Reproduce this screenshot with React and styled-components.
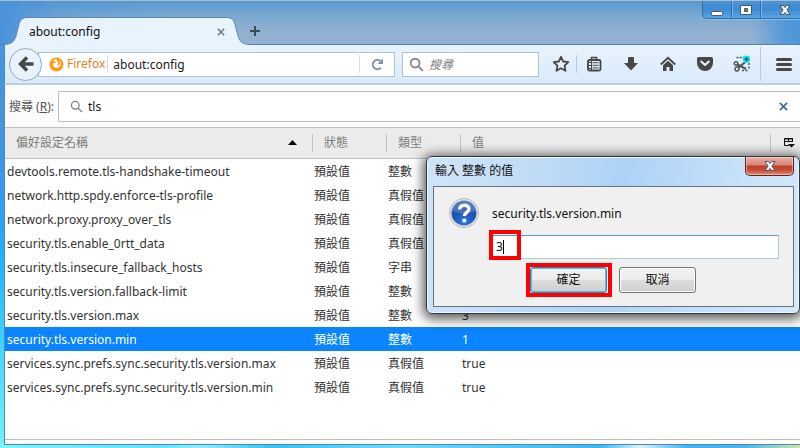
import React from "react";
import styled, { createGlobalStyle, css } from "styled-components";

const Global = createGlobalStyle`
  *, *::before, *::after { box-sizing: border-box; }
  html, body, #root { height: 100%; }
  body { margin: 0; overflow: hidden; }
  body, button, input {
    font: 12px/24px "Noto Sans", "Noto Sans CJK TC", sans-serif;
    color: #333;
  }
  button { padding: 0; border: 0; background: none; }
`;

const Desktop = styled.div`
  position: relative;
  height: 100%;
  min-height: 100vh;
  padding: 0 0 3px 4px;
  overflow: hidden;
  background: linear-gradient(180deg, #4f93d8 0, #3f95e0 150px, #2f9ff0 210px, #22b2f8 260px, #4ad4fc 350px, #74f2fc 448px);
`;

const DesktopGlow = styled.div`
  position: absolute;
  inset: auto 0 0 0;
  height: 4px;
  background: linear-gradient(90deg, #7df5fd 0, #5fe6fb 20%, #8ff0ff 25%, #35c4f5 34%, #6fdcf8 50%, #3bb7f2 75%, #d8f4ff 80%, #3cb4f4 86%, #4bb5ee 93%, #cfe8a8 100%);
`;

const BrowserWindow = styled.main`
  position: relative;
  display: flex;
  flex-direction: column;
  height: 100%;
`;

const TitleBar = styled.header`
  display: flex;
  align-items: flex-end;
  height: 45px;
  margin-left: -4px;
  padding-left: 4px;
  border-top: 1px solid #a9bdd0;
  background:
    linear-gradient(#5282ae, #5282ae) 0 100% / 100% 1px no-repeat,
    linear-gradient(90deg, rgba(73, 145, 218, 1) 0, rgba(73, 145, 218, 0.3) 60px, transparent 170px, transparent 94%, rgba(70, 148, 218, 0.8) 98%, #4b97da 100%),
    linear-gradient(180deg, #5a98d0 0, #79a8d2 14px, #92b0d0 30px, #93b2d2 100%);
`;

const Tab = styled.div`
  display: flex;
  flex: 0 0 246px;
  height: 28px;
`;

const TabEdge = styled.svg`
  flex: none;
  width: 24px;
  height: 28px;
`;

const TabBody = styled.div`
  display: flex;
  flex: 1;
  align-items: center;
  justify-content: space-between;
  padding-left: 1px;
  border-top: 1px solid #5b88b2;
  background: #e8f3fd;
  color: #111;
`;

const IconButton = styled.button`
  display: grid;
  flex: none;
  place-items: center;
  width: ${(p) => p.$width || 24}px;
  height: 24px;
  color: #4a4a4a;
  svg { display: block; }
`;

const WindowControls = styled.div`
  display: flex;
  align-self: flex-start;
  height: 18px;
  margin-left: auto;
  border: solid #2f6ea8;
  border-width: 0 0 1px 1px;
  border-radius: 0 0 0 5px;
  background: linear-gradient(#4c95d8, #3d8bd2 50%, #5aa5e4);
  box-shadow: 0 1px 0 #8bbbe6;
`;

const WindowControl = styled.button`
  display: grid;
  place-items: center;
  width: ${(p) => p.$width}px;
  height: 17px;
  & + & { border-left: 1px solid #2f6ea8; box-shadow: inset 1px 0 #7db6e8; }
  &:last-child { padding-left: 8px; }
`;

const NavBar = styled.nav`
  display: flex;
  align-items: center;
  height: 40px;
  padding-left: 5px;
  border-left: 1px solid #4f87b8;
  border-bottom: 2px solid #bccfe2;
  background: linear-gradient(#e8f3fd, #daeafa);
`;

const BackButton = styled.button`
  position: relative;
  display: grid;
  flex: none;
  place-items: center;
  width: 33px;
  height: 33px;
  margin-left: -1px;
  border: 1px solid #8faac4;
  border-radius: 50%;
  background: #e9f3fd;
`;

const UrlBox = styled.div`
  display: flex;
  flex: 1;
  align-items: center;
  min-width: 0;
  height: 25px;
  margin-left: -4px;
  padding-left: 10px;
  border: 1px solid #aec2d6;
  background: #fff;
`;

const Identity = styled.div`
  display: flex;
  flex: none;
  align-items: center;
  gap: 3px;
  height: 18px;
  padding-right: 2px;
  border-right: 1px solid #dcdcdc;
  color: #e08125;
`;

const TextInput = styled.input`
  flex: 1;
  min-width: 0;
  width: 100%;
  height: 24px;
  padding: 1px 5px 0;
  border: 0;
  outline: 0;
  background: transparent;
  color: #1a1a1a;
  &::placeholder { color: #808080; font-style: italic; opacity: 1; }
`;

const ReloadSlot = styled.div`
  display: flex;
  height: 18px;
  align-items: center;
  border-left: 1px solid #ddd;
`;

const WebSearch = styled.div`
  display: flex;
  align-items: center;
  flex: 0 0 137px;
  height: 25px;
  margin: 0 7px;
  padding-left: 6px;
  border: 1px solid #aec2d6;
  background: #fff;
`;

const Divider = styled.span`
  flex: none;
  width: 1px;
  height: ${(p) => p.$height}px;
  margin-right: ${(p) => (p.$tight ? -2 : 0)}px;
  background: #bccbd9;
`;

const FilterBar = styled.form`
  display: flex;
  align-items: center;
  gap: 4px;
  height: 42px;
  padding-left: 4px;
  border-left: 1px solid #4f87b8;
  background: #fbfbfb;
  label { flex: none; padding-top: 1px; color: #555; }
`;

const FilterField = styled.div`
  display: flex;
  flex: 1;
  align-items: center;
  height: 31px;
  padding: 0 5px 0 11px;
  border: 1px solid #bdbdbd;
  border-right: 0;
  border-radius: 2px 0 0 2px;
  background: #fff;
`;

const Content = styled.section`
  flex: 1;
  min-height: 0;
  border: solid #4f87b8;
  border-width: 0 0 1px 1px;
  background: #fbfbfb;
  padding-bottom: 4px;
`;

const TablePane = styled.div`
  height: 100%;
  border: solid #c0c0c0;
  border-width: 1px 0;
  background: #fff;
`;

const PrefTable = styled.table`
  width: 100%;
  border-collapse: collapse;
  table-layout: fixed;
`;

const Col = styled.col`
  width: ${(p) => (p.$width ? `${p.$width}px` : "auto")};
`;

const HeadCell = styled.th`
  height: 30px;
  padding: 0;
  border-bottom: 1px solid #bdbdbd;
  background: #ebebeb;
  color: #7b7b7b;
  font-weight: 400;
  text-align: left;
`;

const HeadLabel = styled.div`
  display: flex;
  align-items: center;
  justify-content: space-between;
  height: 18px;
  padding: 0 15px 0 ${(p) => (p.$first ? 10 : 11)}px;
  border-left: 1px solid ${(p) => (p.$first ? "transparent" : "#c4c4c4")};
`;

const PrefRow = styled.tr`
  height: 24px;
  ${(p) => p.$selected && css`
    background: #0a84ff;
    color: #fff;
  `}
`;

const Cell = styled.td`
  padding: 2px 0 0 2px;
  line-height: 22px;
  white-space: nowrap;
`;

const Dialog = styled.section`
  position: absolute;
  top: 156px;
  right: 0;
  display: flex;
  flex-direction: column;
  width: 374px;
  height: 158px;
  padding: 0 5px 6px 6px;
  border: 1px solid #30373f;
  border-radius: 6px;
  background: linear-gradient(100deg, #cfe4fa 0, #c3dcf6 25%, #add2f6 50%, #c8e1fa 80%, #d4e8fc 100%);
  box-shadow: inset 0 0 0 1px #eef7ff, 0 2px 12px 3px rgba(0, 0, 0, 0.65);
`;

const DialogTitle = styled.header`
  display: flex;
  flex: none;
  justify-content: space-between;
  height: 29px;
  padding-left: 2px;
  h1 { margin: 0; color: #111; font-size: 12px; font-weight: 400; line-height: 28px; }
`;

const CloseButton = styled.button`
  display: grid;
  place-items: center;
  width: 49px;
  height: 19px;
  border: solid #5a2620;
  border-width: 0 1px 1px;
  border-radius: 0 0 5px 5px;
  background: linear-gradient(#e9aea3 0, #d98375 45%, #bf3b26 50%, #c9503a 75%, #e08c78 100%);
  box-shadow: inset 0 0 0 1px rgba(255, 255, 255, 0.4);
`;

const DialogBody = styled.form`
  display: grid;
  flex: 1;
  grid-template-columns: 44px 1fr;
  align-content: start;
  padding: 10px 14px 0;
  border: 1px solid #66727e;
  background: #f0f0f0;
  label { color: #111; line-height: 34px; }
`;

const PromptRow = styled.div`
  position: relative;
  grid-column: 2;
  height: 24px;
  margin-top: 4px;
`;

const PromptInput = styled.input`
  width: 100%;
  height: 24px;
  padding: 0 3px;
  border: 1px solid #a9cbe6;
  border-top-color: #5e9ac6;
  outline: 0;
  background: #fff;
  color: #111;
`;

const Highlight = styled.span`
  position: absolute;
  inset: -4px -5px -4px -4px;
  border: 4px solid #f00;
  pointer-events: none;
`;

const InputHighlight = styled(Highlight)`
  inset: -5px auto auto -3px;
  width: 32px;
  height: 30px;
`;

const Caret = styled.span`
  position: absolute;
  top: 5px;
  left: 11px;
  width: 1px;
  height: 14px;
  background: #000;
`;

const Actions = styled.div`
  display: flex;
  grid-column: 1 / -1;
  gap: 12px;
  margin: 8px 0 0 82px;
`;

const ActionSlot = styled.div`
  position: relative;
`;

const ActionButton = styled.button`
  display: block;
  width: 77px;
  height: 26px;
  border: 1px solid ${(p) => (p.$primary ? "#3c7fb1" : "#777")};
  border-radius: 3px;
  background: linear-gradient(#f3f3f3 0, #ebebeb 50%, #dcdcdc 51%, #cfcfcf 100%);
  box-shadow: inset 0 0 0 1px ${(p) => (p.$primary ? "#48c4ea" : "#fafafa")};
  color: #111;
`;

const SearchIcon = ({ size, color, weight }) => (
  <svg width={size} height={size} viewBox="0 0 16 16" fill="none" stroke={color} strokeWidth={weight} aria-hidden="true">
    <circle cx="6.5" cy="6.5" r="4.7" />
    <path d="M10 10l4.8 4.8" />
  </svg>
);

const CrossIcon = ({ size, color }) => (
  <svg width={size} height={size} viewBox="0 0 10 10" stroke={color} strokeWidth="2" aria-hidden="true">
    <path d="M1 1l8 8M9 1L1 9" />
  </svg>
);

const GlassCross = () => (
  <svg width="14" height="12" viewBox="0 0 14 12" aria-hidden="true">
    <path d="M2 1.5h3.2L7 3.6l1.8-2.1H12L8.9 6l3.1 4.5H8.8L7 8.4l-1.8 2.1H2L5.1 6z" fill="#fff" stroke="#4a5568" strokeWidth="1" />
  </svg>
);

const FirefoxIcon = () => (
  <svg width="15" height="15" viewBox="0 0 15 15" aria-hidden="true">
    <circle cx="7.5" cy="7.5" r="7" fill="#ff9b10" />
    <path d="M5 2.600C7 1.300 10 1.800 11.300 4c1.300 2.300.6 5.200-1.600 6.300-2.200 1.100-4.900.4-5.700-1.700-.4-1 0-2 .9-2.300l2-.4c.4-.9-.6-1.200-1.600-1.300-.7-.1-.9-1-.3-2z" fill="#fff" />
    <path d="M7.300 1c2.600.9 4 2.900 3.600 5.300-.3 1.800-2 2.500-3.300 1.800 1.300-.3 1.800-1.600 1.300-2.900-.5-1.300-1.900-2.300-1.600-4.200z" fill="#ff9b10" />
  </svg>
);

const ScissorsIcon = () => (
  <svg width="18" height="18" viewBox="0 0 18 18" fill="none" stroke="#505050" aria-hidden="true">
    <path d="M3.5 2.5h8" strokeWidth="1.6" strokeDasharray="2 1.2" />
    <path d="M16 8v7M9 15.500h7" strokeWidth="1.4" strokeDasharray="2 1.500" />
    <circle cx="3" cy="8.500" r="1.800" strokeWidth="1.4" />
    <circle cx="4" cy="14" r="2" strokeWidth="1.4" />
    <path d="M4.500 9.300l8.500 4.700M5.500 12.500L13 6.500" strokeWidth="2" />
    <circle cx="13.500" cy="4.300" r="3.700" fill="#0ee6f0" stroke="none" />
    <path d="M13.500 2.300v4M11.500 4.300h4" stroke="#16606b" strokeWidth="1.6" />
  </svg>
);

const prefs = [
  ["devtools.remote.tls-handshake-timeout", "整數", ""],
  ["network.http.spdy.enforce-tls-profile", "真假值", ""],
  ["network.proxy.proxy_over_tls", "真假值", ""],
  ["security.tls.enable_0rtt_data", "真假值", ""],
  ["security.tls.insecure_fallback_hosts", "字串", ""],
  ["security.tls.version.fallback-limit", "整數", ""],
  ["security.tls.version.max", "整數", "3"],
  ["security.tls.version.min", "整數", "1"],
  ["services.sync.prefs.sync.security.tls.version.max", "真假值", "true"],
  ["services.sync.prefs.sync.security.tls.version.min", "真假值", "true"],
];

function Tabs() {
  return (
    <TitleBar>
      <Tab>
        <TabEdge viewBox="0 0 24 28" aria-hidden="true">
          <path d="M0 28V27.5C8 27.5 11 24 12.5 17L14.5 9C16 3 18 .5 24 .5V28z" fill="#e8f3fd" />
          <path d="M0 27.5C8 27.5 11 24 12.5 17L14.5 9C16 3 18 .5 24 .5" fill="none" stroke="#5b88b2" />
        </TabEdge>
        <TabBody>
          about:config
          <IconButton $width={10} aria-label="關閉分頁"><CrossIcon size={8} color="#6f7a85" /></IconButton>
        </TabBody>
        <TabEdge viewBox="0 0 24 28" aria-hidden="true">
          <path d="M24 28V27.5C16 27.5 13 24 11.5 17L9.5 9C8 3 6 .5 0 .5V28z" fill="#e8f3fd" />
          <path d="M24 27.5C16 27.5 13 24 11.5 17L9.5 9C8 3 6 .5 0 .5" fill="none" stroke="#5b88b2" />
        </TabEdge>
      </Tab>
      <IconButton $width={10} aria-label="開新分頁">
        <svg width="10" height="18" viewBox="0 0 10 18" stroke="#3d4b59" strokeWidth="2" aria-hidden="true">
          <path d="M5 2v10M0 7h10" />
        </svg>
      </IconButton>
      <WindowControls>
        <WindowControl $width={28} aria-label="最小化">
          <svg width="14" height="14" aria-hidden="true"><rect x="1.5" y="8.5" width="11" height="4" rx="1" fill="#fff" stroke="#435a70" /></svg>
        </WindowControl>
        <WindowControl $width={29} aria-label="最大化">
          <svg width="14" height="14" aria-hidden="true">
            <path d="M1.5 2.5h11v9h-11zM5.5 5.500v3h3v-3z" fill="#fff" fillRule="evenodd" stroke="#435a70" />
          </svg>
        </WindowControl>
        <WindowControl $width={40} aria-label="關閉"><GlassCross /></WindowControl>
      </WindowControls>
    </TitleBar>
  );
}

function Toolbar() {
  return (
    <NavBar>
      <BackButton aria-label="上一頁">
        <svg width="16" height="16" viewBox="0 0 16 16" fill="none" stroke="#474747" strokeWidth="3.4" aria-hidden="true">
          <path d="M15.500 8H3M9 1.500L2.500 8 9 14.500" />
        </svg>
      </BackButton>
      <UrlBox>
        <Identity><FirefoxIcon />Firefox</Identity>
        <TextInput aria-label="網址" defaultValue="about:config" />
        <ReloadSlot>
          <IconButton $width={34} aria-label="重新載入">
            <svg width="13" height="13" viewBox="0 0 13 13" aria-hidden="true">
              <path d="M9.700 9.800A4.600 4.600 0 1 1 9.300 3" fill="none" stroke="#8292a5" strokeWidth="2" />
              <path d="M12 .5V6H6.500z" fill="#8292a5" />
            </svg>
          </IconButton>
        </ReloadSlot>
      </UrlBox>
      <WebSearch>
        <SearchIcon size={15} color="#888" weight={2} />
        <TextInput aria-label="網路搜尋" placeholder="搜尋" />
      </WebSearch>
      <IconButton $width={30} aria-label="書籤">
        <svg width="18" height="18" viewBox="0 0 18 18" fill="none" stroke="#474747" strokeWidth="1.8" strokeLinejoin="round" aria-hidden="true">
          <path d="M9 1.800l2.200 4.700 5.100.7-3.700 3.500.9 5.100L9 13.300l-4.500 2.500.9-5.100-3.700-3.500 5.100-.7z" />
        </svg>
      </IconButton>
      <Divider $height={18} $tight />
      <IconButton $width={37} aria-label="書籤清單">
        <svg width="16" height="16" viewBox="0 0 16 16" fill="none" stroke="#474747" aria-hidden="true">
          <path d="M5.500 4V1.500h5V4" strokeWidth="1.6" />
          <rect x="2" y="4" width="12.500" height="10.500" rx="1.500" strokeWidth="1.800" />
          <path d="M1 6.500h4M1 9.500h4M1 12.500h4" strokeWidth="1" />
          <path d="M6.500 6.700h6M6.500 9.300h6M6.500 11.900h6" strokeWidth="1" />
          <path d="M5.500 4v10" strokeWidth="1" />
        </svg>
      </IconButton>
      <IconButton $width={37} aria-label="下載">
        <svg width="16" height="16" viewBox="0 0 16 16" fill="#474747" aria-hidden="true">
          <path d="M6 1h4q1 0 1 1v5h4L8 14.500 1 7h4V2q0-1 1-1z" />
        </svg>
      </IconButton>
      <IconButton $width={37} aria-label="首頁">
        <svg width="16" height="16" viewBox="0 0 16 16" aria-hidden="true">
          <path d="M.8 8.500L8 1.800l7.200 6.700" fill="none" stroke="#474747" strokeWidth="1.800" />
          <path d="M3 9.300L8 4.700l5 4.600V15H9.500v-4h-3v4H3z" fill="#474747" />
        </svg>
      </IconButton>
      <IconButton $width={37} aria-label="Pocket">
        <svg width="18" height="16" viewBox="0 0 18 16" aria-hidden="true">
          <path d="M2.500 1h13Q17 1 17 2.500V7A8 8 0 0 1 1 7V2.500Q1 1 2.500 1z" fill="#474747" />
          <path d="M5.200 5.500L9 9l3.800-3.500" fill="none" stroke="#eaf3fc" strokeWidth="2" strokeLinecap="round" strokeLinejoin="round" />
        </svg>
      </IconButton>
      <IconButton $width={37} aria-label="擷取畫面"><ScissorsIcon /></IconButton>
      <Divider $height={34} />
      <IconButton $width={39} aria-label="選單">
        <svg width="24" height="15" viewBox="-6 0 24 15" stroke="#474747" strokeWidth="3" strokeLinecap="round" aria-hidden="true">
          <path d="M2.500 2.500h13M2.500 7.500h13M2.500 12.500h13" />
        </svg>
      </IconButton>
    </NavBar>
  );
}

function Preferences() {
  return (
    <Content>
      <TablePane>
        <PrefTable>
          <colgroup>
            <Col $width={307} /><Col $width={74} /><Col $width={74} /><Col /><Col $width={30} />
          </colgroup>
          <thead>
            <tr>
              <HeadCell>
                <HeadLabel $first>
                  偏好設定名稱
                  <svg width="9" height="5" aria-hidden="true"><path d="M0 5L4.500 0 9 5z" fill="#000" /></svg>
                </HeadLabel>
              </HeadCell>
              <HeadCell><HeadLabel>狀態</HeadLabel></HeadCell>
              <HeadCell><HeadLabel>類型</HeadLabel></HeadCell>
              <HeadCell><HeadLabel>值</HeadLabel></HeadCell>
              <HeadCell>
                <HeadLabel>
                  <IconButton $width={14} aria-label="選擇要顯示的欄位">
                    <svg width="12" height="11" viewBox="0 0 12 11" fill="none" stroke="#111" aria-hidden="true">
                      <path d="M6 8.500H1.500v-7h8V5M1 2h9M1 4.500h9M5.500 2v3" />
                      <path d="M5 7h7L8.500 10.500z" fill="#111" stroke="none" />
                    </svg>
                  </IconButton>
                </HeadLabel>
              </HeadCell>
            </tr>
          </thead>
          <tbody>
            {prefs.map(([name, type, value]) => (
              <PrefRow key={name} $selected={name === "security.tls.version.min"}>
                <Cell>{name}</Cell>
                <Cell>預設值</Cell>
                <Cell>{type}</Cell>
                <Cell colSpan={2}>{value}</Cell>
              </PrefRow>
            ))}
          </tbody>
        </PrefTable>
      </TablePane>
    </Content>
  );
}

function ValueDialog() {
  return (
    <Dialog role="dialog" aria-labelledby="dialog-title">
      <DialogTitle>
        <h1 id="dialog-title">輸入 整數 的值</h1>
        <CloseButton aria-label="關閉對話框"><GlassCross /></CloseButton>
      </DialogTitle>
      <DialogBody onSubmit={(e) => e.preventDefault()}>
        <svg width="32" height="32" viewBox="0 0 32 32" aria-hidden="true">
          <defs>
            <radialGradient id="ball" cx="50%" cy="85%" r="80%">
              <stop offset="0" stopColor="#2f7be0" />
              <stop offset="0.6" stopColor="#1b4fae" />
              <stop offset="1" stopColor="#3a66b4" />
            </radialGradient>
          </defs>
          <circle cx="16" cy="16" r="14.500" fill="#e3e5e8" stroke="#b3b6ba" />
          <circle cx="16" cy="16" r="12.500" fill="url(#ball)" />
          <path d="M4 14a12 12 0 0 1 24 0q-12 5-24 0z" fill="#fff" opacity="0.16" />
          <path d="M11.500 12.500c0-5.500 9.500-5.500 9.500-.5 0 3.500-4.700 3.300-4.700 7" fill="none" stroke="#fff" strokeWidth="3.400" />
          <circle cx="16.300" cy="23.500" r="2.100" fill="#fff" />
        </svg>
        <label htmlFor="pref-value">security.tls.version.min</label>
        <PromptRow>
          <PromptInput id="pref-value" defaultValue="3" />
          <Caret />
          <InputHighlight />
        </PromptRow>
        <Actions>
          <ActionSlot>
            <ActionButton type="submit" $primary>確定</ActionButton>
            <Highlight />
          </ActionSlot>
          <ActionButton type="button">取消</ActionButton>
        </Actions>
      </DialogBody>
    </Dialog>
  );
}

export default function App() {
  return (
    <Desktop>
      <Global />
      <DesktopGlow />
      <BrowserWindow>
        <Tabs />
        <Toolbar />
        <FilterBar onSubmit={(e) => e.preventDefault()}>
          <label htmlFor="filter">搜尋 (<u>R</u>):</label>
          <FilterField>
            <SearchIcon size={13} color="#777" weight={1.5} />
            <TextInput id="filter" defaultValue="tls" />
            <IconButton type="button" aria-label="清除搜尋"><CrossIcon size={9} color="#3a70a8" /></IconButton>
          </FilterField>
        </FilterBar>
        <Preferences />
      </BrowserWindow>
      <ValueDialog />
    </Desktop>
  );
}
